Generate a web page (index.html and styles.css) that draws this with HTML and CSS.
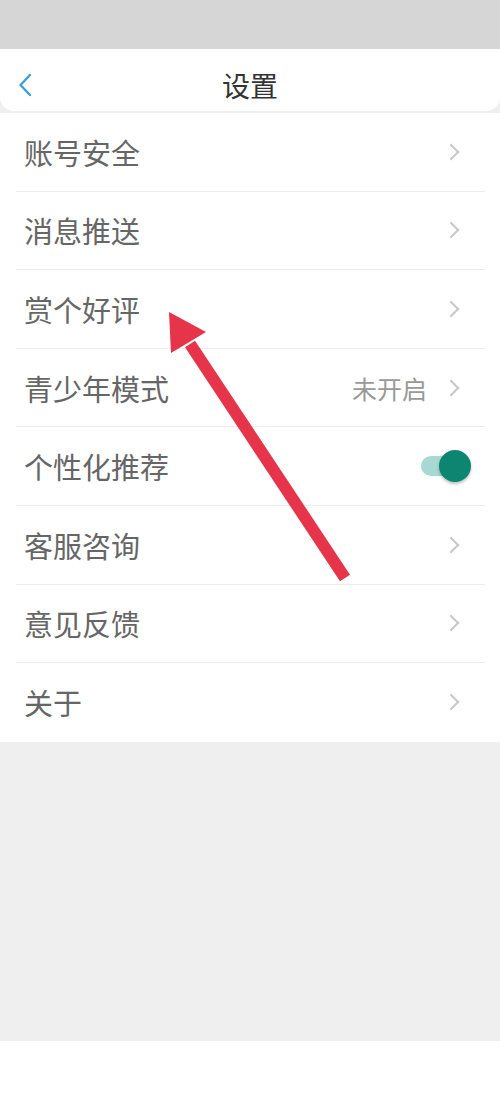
FILE: index.html
```html
<!DOCTYPE html>
<html lang="zh-CN">
<head>
  <meta charset="UTF-8" />
  <title>设置</title>
  <meta name="viewport" content="width=device-width, initial-scale=1.0"/>
  <link rel="stylesheet" href="styles.css">
</head>
<body>

<div class="status-bar"></div>

<div class="page">
  <header>
    <button class="back-button">
      <svg width="14" height="24" viewBox="0 0 14 24"><path d="M12 2 L2.5 12 L12 22" fill="none" stroke="#3a9fd6" stroke-width="2.4" stroke-linecap="round" stroke-linejoin="round"/></svg>
    </button>
    <h1>设置</h1>
  </header>

  <ul class="setting-list">
    <li class="setting-item"><span>账号安全</span><i class="arrow"></i></li>
    <li class="setting-item"><span>消息推送</span><i class="arrow"></i></li>
    <li class="setting-item"><span>赏个好评</span><i class="arrow"></i></li>
    <li class="setting-item"><span>青少年模式</span><span class="value">未开启</span><i class="arrow"></i></li>
    <li class="setting-item"><span>个性化推荐</span><span class="switch on"><span class="knob"></span></span></li>
    <li class="setting-item"><span>客服咨询</span><i class="arrow"></i></li>
    <li class="setting-item"><span>意见反馈</span><i class="arrow"></i></li>
    <li class="setting-item"><span>关于</span><i class="arrow"></i></li>
  </ul>

  <div class="blank-area"></div>

  <!-- 标注箭头 -->
  <svg class="pointer" width="500" height="1111" viewBox="0 0 500 1111">
    <line x1="345" y1="578" x2="190" y2="344" stroke="#e6344a" stroke-width="12"/>
    <polygon points="169,312 206,332 171,353" fill="#e6344a"/>
  </svg>
</div>

</body>
</html>
```

FILE: styles.css
```css
body {
  margin: 0;
  font-family: "Noto Sans CJK SC", "Noto Sans", sans-serif;
  background-color: #fff;
  color: #666;
}

.status-bar {
  height: 49px;
  background-color: #d6d6d6;
}

.page {
  position: relative;
  background-color: #efefef;
}

header {
  position: relative;
  display: flex;
  justify-content: center;
  align-items: center;
  height: 62px;
  padding-top: 9px;
  box-sizing: border-box;
  background-color: #fff;
  border-radius: 0 0 14px 14px;
}

header h1 {
  margin: 0;
  font-size: 28px;
  font-weight: normal;
  color: #333;
}

.back-button {
  position: absolute;
  left: 18px;
  top: 24px;
  padding: 0;
  background: none;
  border: none;
  line-height: 0;
}

.setting-list {
  list-style: none;
  margin: 2px 0 0;
  padding: 0 15px 0 16px;
  background-color: #fff;
}

.setting-item {
  display: flex;
  align-items: center;
  height: 78.6px;
  box-sizing: border-box;
  padding: 0 26px 0 8px;
  border-bottom: 1px solid #ececec;
  font-size: 29px;
}

.setting-item:last-child {
  border-bottom: none;
}

.setting-item span:first-child {
  flex: 1;
}

.value {
  font-size: 25px;
  color: #999;
  margin-right: 18px;
}

.arrow {
  width: 10px;
  height: 10px;
  border-top: 2px solid #c8c8c8;
  border-right: 2px solid #c8c8c8;
  transform: rotate(45deg);
  margin-right: 2px;
}

.switch {
  position: relative;
  width: 42px;
  height: 20px;
  border-radius: 10px;
  background-color: #a7d8d2;
  margin-right: -4px;
}

.switch .knob {
  position: absolute;
  right: -8px;
  top: -6px;
  width: 32px;
  height: 32px;
  border-radius: 50%;
  background-color: #0d8671;
  box-shadow: 0 2px 3px rgba(0, 0, 0, 0.25);
}

.blank-area {
  height: 299px;
}

.pointer {
  position: absolute;
  left: 0;
  top: -49px;
  pointer-events: none;
}
```
